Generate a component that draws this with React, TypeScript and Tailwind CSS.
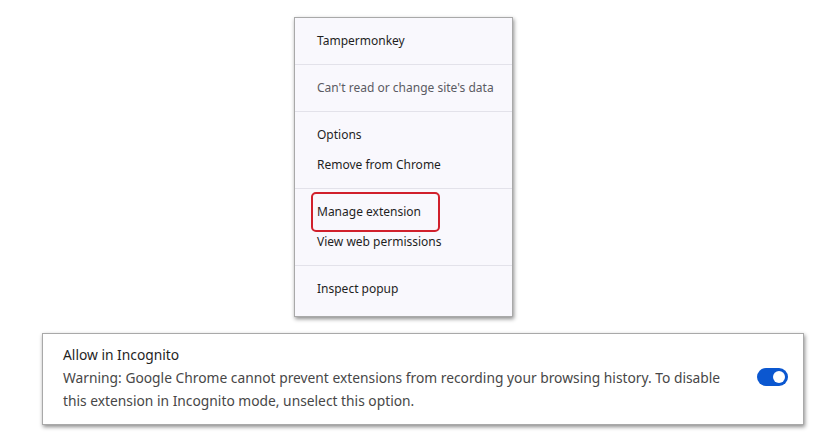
import React from 'react';

const font = { fontFamily: '"Noto Sans", "Open Sans", Arial, sans-serif' };

const MenuItem: React.FC<{ label: string; muted?: boolean; highlight?: boolean }> = ({ label, muted, highlight }) => (
  <div className={`relative flex h-[30px] items-center whitespace-nowrap px-[22px] text-[12px] ${muted ? 'text-[#5b5b63]' : 'text-[#1f1f1f]'}`}>
    {highlight && (
      <span className="absolute left-[16px] top-[-5px] h-[40px] w-[129px] rounded-[5px] border-2 border-[#d1202c]" />
    )}
    <span className="relative">{label}</span>
  </div>
);

const Section: React.FC<{ children: React.ReactNode; first?: boolean; last?: boolean }> = ({ children, first, last }) => (
  <div className={`${first ? '' : 'border-t border-[#e3e2ea]'} pt-2 ${last ? 'pb-3' : 'pb-2'}`}>{children}</div>
);

const Toggle: React.FC = () => (
  <div className="flex h-[18px] w-[31px] items-center justify-end rounded-full bg-[#0b57d0] pr-[3px]">
    <div className="h-[12px] w-[12px] rounded-full bg-white" />
  </div>
);

export default function App() {
  return (
    <div className="h-[440px] w-[828px] bg-white" style={font}>
      <div className="pt-[17px]">
        <div className="ml-[294px] w-[219px] border border-[#a9a9a9] bg-[#f9f8fd] shadow-[1px_2px_4px_rgba(0,0,0,0.45)]">
          <Section first>
            <MenuItem label="Tampermonkey" />
          </Section>
          <Section>
            <MenuItem label="Can't read or change site's data" muted />
          </Section>
          <Section>
            <MenuItem label="Options" />
            <MenuItem label="Remove from Chrome" />
          </Section>
          <Section>
            <MenuItem label="Manage extension" highlight />
            <MenuItem label="View web permissions" />
          </Section>
          <Section last>
            <MenuItem label="Inspect popup" />
          </Section>
        </div>
      </div>

      <div className="ml-[42px] mt-[16px] flex h-[92px] w-[762px] items-start border border-[#a9a9a9] bg-white shadow-[1px_2px_4px_rgba(0,0,0,0.45)]">
        <div className="flex-1 pl-[20px] pt-[9px] text-[13.8px] leading-[23px]">
          <div className="text-[#1f1f1f]">Allow in Incognito</div>
          <div className="text-[#474747]">
            Warning: Google Chrome cannot prevent extensions from recording your browsing history. To disable
            <br />
            this extension in Incognito mode, unselect this option.
          </div>
        </div>
        <div className="pl-4 pr-[15px] pt-[34px]">
          <Toggle />
        </div>
      </div>
    </div>
  );
}
